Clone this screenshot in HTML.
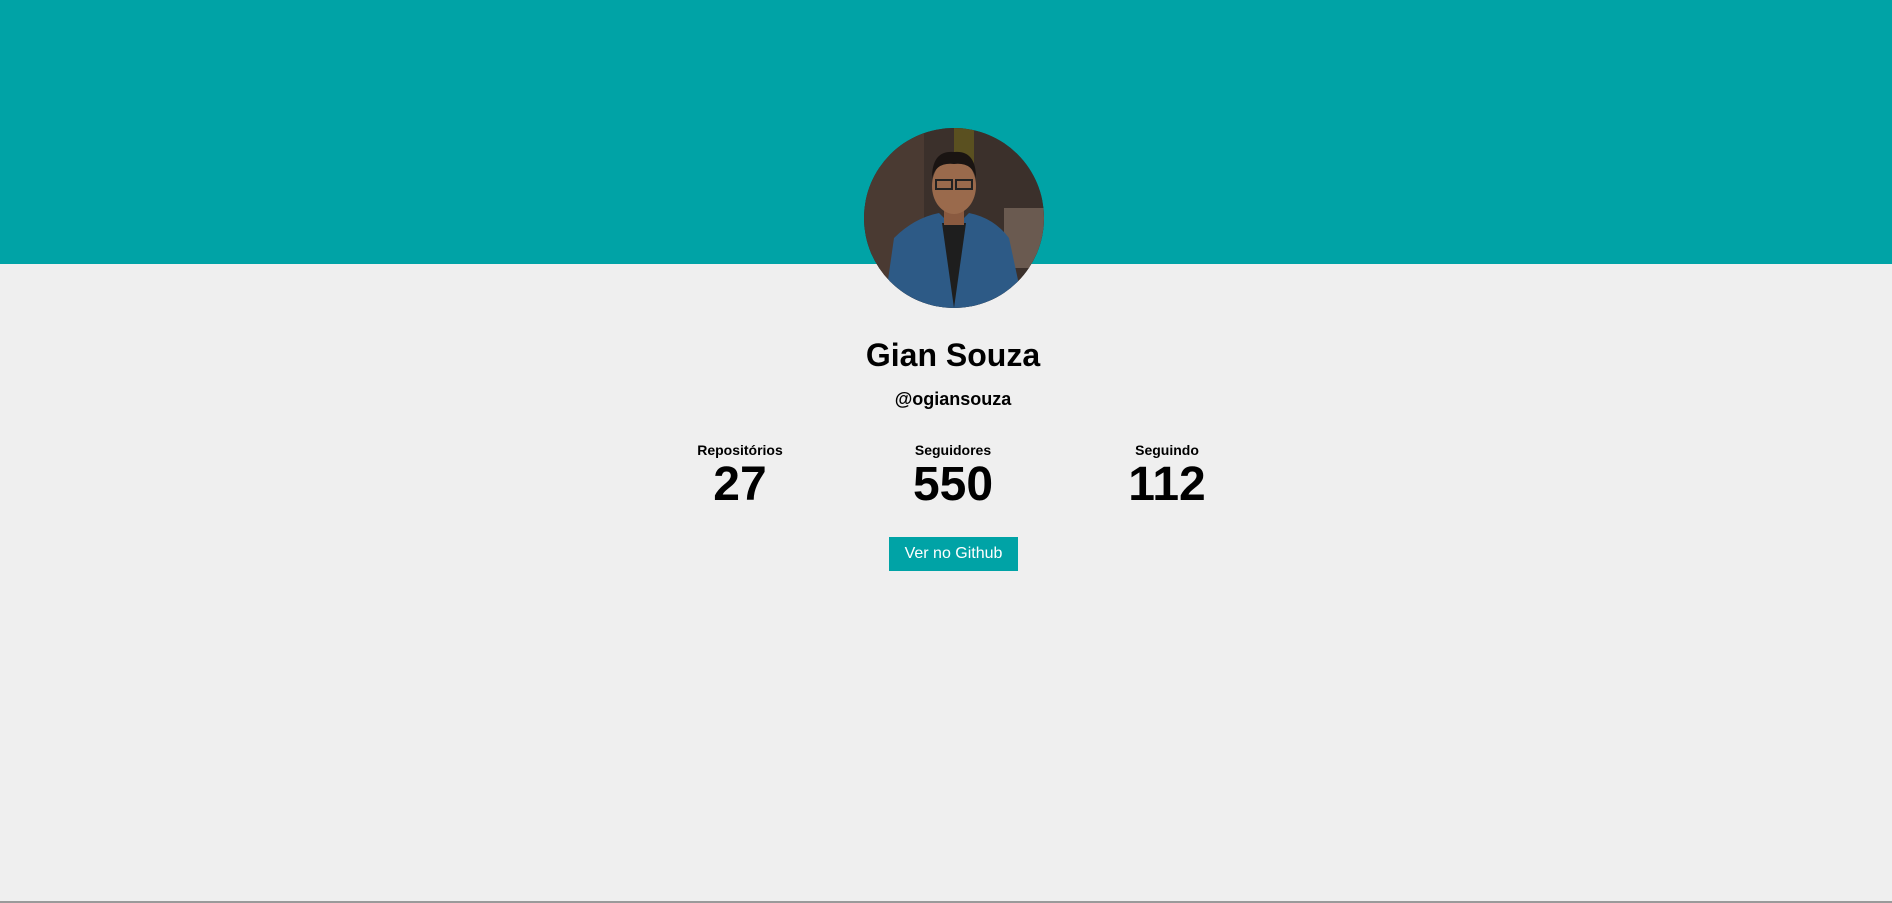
<!DOCTYPE html>
<html><head><meta charset="utf-8"><style>
html,body{margin:0;padding:0;width:1892px;height:903px;overflow:hidden;background:#efefef;font-family:"Liberation Sans",Arial,sans-serif;}
.top{position:absolute;left:0;top:0;width:1892px;height:264px;background:#00a3a6;}
.av{position:absolute;left:864px;top:128px;width:180px;height:180px;border-radius:50%;overflow:hidden;background:#3a2f2a;}
.c{position:absolute;left:0;width:1906px;text-align:center;color:#000;font-weight:bold;}
.stat{position:absolute;width:200px;text-align:center;font-weight:bold;}
.stat .l{font-size:14px;}
.stat .n{font-size:48px;line-height:50px;margin-top:2px;}
.btn{position:absolute;left:889px;top:537px;width:129px;height:34px;background:#00a3a6;color:#fff;font-size:16px;line-height:34px;text-align:center;}
.bl{position:absolute;left:0;top:901px;width:1892px;height:2px;background:#9a9a9a;}
</style></head><body>
<div class="top"></div>
<div class="av"><svg width="180" height="180" viewBox="0 0 180 180">
<rect width="180" height="180" fill="#3b302b"/>
<rect x="0" y="0" width="60" height="180" fill="#4a3a32"/>
<rect x="140" y="80" width="40" height="60" fill="#6a5a50"/>
<rect x="90" y="0" width="20" height="40" fill="#5a5020"/>
<path d="M20 180 L30 110 Q50 90 75 85 L90 100 L105 85 Q130 90 145 110 L160 180Z" fill="#2d5a86"/>
<path d="M78 95 L90 180 L102 95Z" fill="#1e1e1e"/>
<rect x="80" y="75" width="20" height="22" fill="#8a5a40"/>
<ellipse cx="90" cy="58" rx="22" ry="28" fill="#9a6a4c"/>
<path d="M68 50 Q68 22 90 24 Q112 22 112 50 Q108 34 90 36 Q72 34 68 50Z" fill="#1a1412"/>
<rect x="72" y="52" width="16" height="9" fill="none" stroke="#222" stroke-width="2"/>
<rect x="92" y="52" width="16" height="9" fill="none" stroke="#222" stroke-width="2"/>
</svg></div>
<div class="c" style="top:337px;font-size:32px;">Gian Souza</div>
<div class="c" style="top:389px;font-size:18px;">@ogiansouza</div>
<div class="stat" style="left:640px;top:442px;"><div class="l">Repositórios</div><div class="n">27</div></div>
<div class="stat" style="left:853px;top:442px;"><div class="l">Seguidores</div><div class="n">550</div></div>
<div class="stat" style="left:1067px;top:442px;"><div class="l">Seguindo</div><div class="n">112</div></div>
<div class="btn">Ver no Github</div>
<div class="bl"></div>
</body></html>
